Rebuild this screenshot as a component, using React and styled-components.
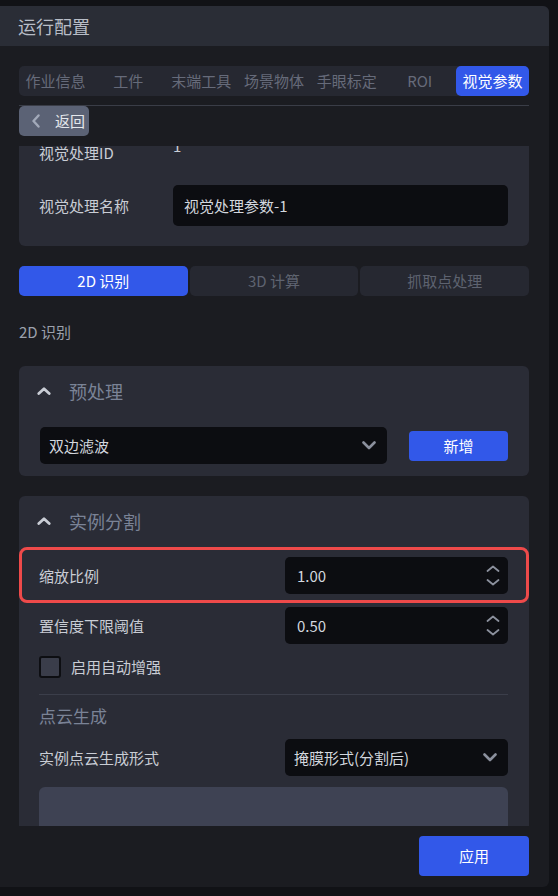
import React, { useLayoutEffect, useRef } from 'react';
import styled, { createGlobalStyle } from 'styled-components';

const Global = createGlobalStyle`
  html, body { margin: 0; padding: 0; background: #111216; }
  body { font-family: "Noto Sans CJK SC", "Noto Sans", sans-serif; }
  * { box-sizing: border-box; }
`;

const Page = styled.div`
  width: 558px;
  height: 896px;
  padding-top: 6px;
  background: #111216;
`;

const Dialog = styled.div`
  width: 549px;
  height: 881px;
  background: #1b1c21;
  border-radius: 0 6px 6px 0;
  overflow: hidden;
  display: flex;
  flex-direction: column;
`;

const Header = styled.div`
  height: 40px;
  flex: none;
  background: #2a2d36;
  display: flex;
  align-items: center;
  padding-left: 18px;
  color: #b8bdc7;
  font-size: 18px;
  line-height: 24px;
`;

const Body = styled.div`
  flex: 1;
  min-height: 0;
  display: flex;
  flex-direction: column;
  padding: 20px 20px 0 19px;
`;

const TabBar = styled.div`
  display: grid;
  grid-template-columns: repeat(7, 1fr);
  height: 30px;
  background: #262831;
  border-radius: 5px;
`;

const Tab = styled.div`
  display: flex;
  align-items: center;
  justify-content: center;
  white-space: nowrap;
  font-size: 15px;
  line-height: 20px;
  border-radius: 5px;
  color: ${(p) => (p.$active ? '#ffffff' : '#666b7a')};
  background: ${(p) => (p.$active ? '#3258e9' : 'transparent')};
`;

const Rule = styled.div`
  height: 1px;
  background: ${(p) => p.$color || '#3a3d47'};
  margin-top: ${(p) => p.$mt || 0}px;
  flex: none;
`;

const BackButton = styled.div`
  width: 70px;
  height: 30px;
  flex: none;
  display: flex;
  align-items: center;
  gap: 15px;
  padding-left: 13px;
  background: #5b6275;
  border-radius: 5px;
  color: #e4e7ec;
  font-size: 15px;
  line-height: 20px;
`;

const Scroll = styled.div`
  margin-top: 10px;
  height: 680px;
  flex: none;
  overflow-y: auto;
  scrollbar-width: none;
  &::-webkit-scrollbar { display: none; }
`;

const Card = styled.div`
  background: #2a2c36;
  border-radius: 6px;
  margin-top: ${(p) => p.$mt || 0}px;
  padding: ${(p) => p.$pad || '0'};
`;

const FormRow = styled.div`
  display: flex;
  align-items: ${(p) => p.$align || 'center'};
  height: ${(p) => p.$h}px;
  margin-top: ${(p) => p.$mt || 0}px;
`;

const Label = styled.div`
  width: ${(p) => (p.$w ? `${p.$w}px` : 'auto')};
  flex: ${(p) => (p.$w ? 'none' : '1')};
  color: #c9cdd5;
  font-size: 15px;
  line-height: 20px;
  white-space: nowrap;
`;

const PlainValue = styled.div`
  color: #c9cdd5;
  font-size: 15px;
  line-height: 20px;
  padding-top: 3px;
`;

const Field = styled.div`
  width: ${(p) => p.$w}px;
  height: ${(p) => p.$h}px;
  flex: none;
  display: flex;
  align-items: center;
  justify-content: space-between;
  padding: 0 ${(p) => p.$pr || 10}px 0 ${(p) => p.$pl || 10}px;
  background: #0c0d11;
  border-radius: 5px;
  color: #d3d7de;
  font-size: 15px;
  line-height: 20px;
  white-space: nowrap;
`;

const SubTabs = styled.div`
  display: grid;
  grid-template-columns: repeat(3, 1fr);
  gap: 2px;
  height: 30px;
  margin-top: 20px;
`;

const SubTab = styled.div`
  display: flex;
  align-items: center;
  justify-content: center;
  border-radius: 5px;
  font-size: 15px;
  line-height: 20px;
  color: ${(p) => (p.$active ? '#ffffff' : '#5e6370')};
  background: ${(p) => (p.$active ? '#3258e9' : '#262831')};
`;

const SectionLabel = styled.div`
  margin-top: 26px;
  color: #9ca1ac;
  font-size: 15px;
  line-height: 20px;
`;

const PanelHead = styled.div`
  height: 50px;
  display: flex;
  align-items: center;
  gap: 18px;
  padding-left: 18px;
  color: #7a8396;
  font-size: 18px;
  line-height: 24px;
`;

const PanelBody = styled.div`
  display: flex;
  flex-direction: column;
  padding: ${(p) => p.$pad};
`;

const InlineRow = styled.div`
  display: flex;
  align-items: center;
  gap: 22px;
  margin-top: 11px;
`;

const BlueButton = styled.div`
  width: ${(p) => p.$w}px;
  height: ${(p) => p.$h}px;
  flex: none;
  display: flex;
  align-items: center;
  justify-content: center;
  background: #3258e9;
  border-radius: 4px;
  color: #ffffff;
  font-size: 15px;
  line-height: 20px;
`;

const Highlight = styled.div`
  position: relative;
  &::after {
    content: '';
    position: absolute;
    top: -10px;
    bottom: -9px;
    left: -20px;
    right: -21px;
    border: 3px solid #ee4a4a;
    border-radius: 8px;
    pointer-events: none;
  }
`;

const CheckRow = styled.div`
  display: flex;
  align-items: center;
  gap: 10px;
  margin-top: 12px;
  height: 22px;
  color: #c9cdd5;
  font-size: 15px;
  line-height: 20px;
`;

const Box = styled.div`
  width: 22px;
  height: 22px;
  border: 2px solid #0d0e12;
  background: #3a3d4a;
  border-radius: 3px;
`;

const SubHeading = styled.div`
  margin-top: 9px;
  color: #7a8396;
  font-size: 17px;
  line-height: 24px;
`;

const GreyBlock = styled.div`
  margin-top: 11px;
  height: 64px;
  background: #3e4253;
  border-radius: 6px;
`;

const Footer = styled.div`
  display: flex;
  justify-content: flex-end;
  padding-top: 10px;
`;

const ChevronDown = () => (
  <svg width="14" height="9" viewBox="0 0 14 9">
    <path d="M1.5 1.5 L7 7 L12.5 1.5" fill="none" stroke="#8b909d" strokeWidth="2.6" strokeLinecap="round" strokeLinejoin="round" />
  </svg>
);

const ChevronUpBold = () => (
  <svg width="14" height="8" viewBox="0 0 14 8">
    <path d="M1.8 6.5 L7 1.8 L12.2 6.5" fill="none" stroke="#c9cdd5" strokeWidth="2.8" strokeLinecap="round" strokeLinejoin="round" />
  </svg>
);

const ChevronLeft = () => (
  <svg width="8" height="14" viewBox="0 0 8 14">
    <path d="M6.5 1.5 L1.5 7 L6.5 12.5" fill="none" stroke="#a2a9b9" strokeWidth="2.4" strokeLinecap="round" strokeLinejoin="round" />
  </svg>
);

const Spinner = () => (
  <svg width="14" height="22" viewBox="0 0 14 22">
    <path d="M1.5 6 L7 1.5 L12.5 6" fill="none" stroke="#8b909d" strokeWidth="1.8" strokeLinecap="round" strokeLinejoin="round" />
    <path d="M1.5 15 L7 19.5 L12.5 15" fill="none" stroke="#8b909d" strokeWidth="1.8" strokeLinecap="round" strokeLinejoin="round" />
  </svg>
);

const tabs = ['作业信息', '工件', '末端工具', '场景物体', '手眼标定', 'ROI', '视觉参数'];
const subTabs = ['2D 识别', '3D 计算', '抓取点处理'];

export default function App() {
  const scrollRef = useRef(null);
  useLayoutEffect(() => {
    if (scrollRef.current) scrollRef.current.scrollTop = 33;
  }, []);

  return (
    <Page>
      <Global />
      <Dialog>
        <Header>运行配置</Header>
        <Body>
          <TabBar>
            {tabs.map((t) => (
              <Tab key={t} $active={t === '视觉参数'}>{t}</Tab>
            ))}
          </TabBar>
          <Rule $mt={9} />
          <BackButton>
            <ChevronLeft />
            返回
          </BackButton>
          <Scroll ref={scrollRef}>
            <Card $pad="20px 21px 20px 20px">
              <FormRow $h={40}>
                <Label $w={134}>视觉处理ID</Label>
                <PlainValue style={{ alignSelf: 'flex-start' }}>1</PlainValue>
              </FormRow>
              <FormRow $h={41} $mt={12}>
                <Label $w={134}>视觉处理名称</Label>
                <Field $w={335} $h={41} $pl={11}>视觉处理参数-1</Field>
              </FormRow>
            </Card>

            <SubTabs>
              {subTabs.map((t, i) => (
                <SubTab key={t} $active={i === 0}>{t}</SubTab>
              ))}
            </SubTabs>

            <SectionLabel>2D 识别</SectionLabel>

            <Card $mt={24}>
              <PanelHead>
                <ChevronUpBold />
                预处理
              </PanelHead>
              <PanelBody $pad="0 21px 12px 21px">
                <InlineRow>
                  <Field $w={347} $h={37} $pl={9} $pr={11}>
                    双边滤波
                    <ChevronDown />
                  </Field>
                  <BlueButton $w={99} $h={30}>新增</BlueButton>
                </InlineRow>
              </PanelBody>
            </Card>

            <Card $mt={20}>
              <PanelHead>
                <ChevronUpBold />
                实例分割
              </PanelHead>
              <PanelBody $pad="11px 21px 20px 20px">
                <Highlight>
                  <FormRow $h={37}>
                    <Label>缩放比例</Label>
                    <Field $w={223} $h={37} $pl={12} $pr={8}>
                      1.00
                      <Spinner />
                    </Field>
                  </FormRow>
                </Highlight>
                <FormRow $h={37} $mt={13}>
                  <Label>置信度下限阈值</Label>
                  <Field $w={223} $h={37} $pl={12} $pr={8}>
                    0.50
                    <Spinner />
                  </Field>
                </FormRow>
                <CheckRow>
                  <Box />
                  启用自动增强
                </CheckRow>
                <Rule $mt={16} $color="#3b3e4a" />
                <SubHeading>点云生成</SubHeading>
                <FormRow $h={37} $mt={11}>
                  <Label>实例点云生成形式</Label>
                  <Field $w={223} $h={37} $pl={9} $pr={11}>
                    掩膜形式(分割后)
                    <ChevronDown />
                  </Field>
                </FormRow>
                <GreyBlock />
              </PanelBody>
            </Card>
          </Scroll>
          <Footer>
            <BlueButton $w={110} $h={40}>应用</BlueButton>
          </Footer>
        </Body>
      </Dialog>
    </Page>
  );
}
